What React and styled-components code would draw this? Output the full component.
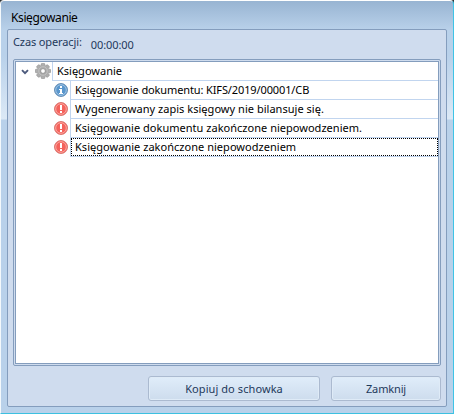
import React from 'react';
import styled, { createGlobalStyle } from 'styled-components';

const GlobalStyle = createGlobalStyle`
  * {
    box-sizing: border-box;
  }

  body {
    margin: 0;
    background: #2b3034;
    overflow: hidden;
  }
`;

const Window = styled.div`
  display: flex;
  flex-direction: column;
  width: 454px;
  height: 414px;
  padding: 0 7px 6px 6px;
  border: 1px solid #3cc0e0;
  border-top-color: #fff;
  border-left-color: #f4f9fc;
  border-right-color: #3fc4e6;
  border-radius: 4px 4px 0 0;
  background:
    linear-gradient(#98b4d2, #b9d1ea 29px, #b9d1ea 55px, #dce9f6 118px, #b9d1ea 119px);
  font-family: 'Noto Sans', 'Open Sans', sans-serif;
  font-size: 11px;
  line-height: 18px;
  color: #000;
`;

const TitleBar = styled.div`
  height: 28px;
  padding: 8px 0 0 4px;
  font-size: 12px;
`;

const Panel = styled.div`
  flex: 1;
  display: flex;
  flex-direction: column;
  width: 440px;
  padding: 3px 5px 5px;
  border: 1px solid #849dbd;
  border-radius: 2px;
  background: #cfdcee;
`;

const Timer = styled.div`
  display: flex;
  gap: 9px;
  height: 26px;
  color: #1e395b;
`;

const TimerValue = styled.span`
  padding-top: 3px;
  letter-spacing: -0.1px;
`;

const Label = styled.span`
  letter-spacing: ${(props) => props.$spacing || 0}px;
  white-space: nowrap;
`;

const ListFrame = styled.div`
  width: 428px;
  height: 307px;
  padding: 1px;
  border: 1px solid #849dbd;
  border-radius: 2px;
  background: #cfdcee;
`;

const List = styled.div`
  height: 303px;
  border: 1px solid #849dbd;
  background: #fff;
`;

const Row = styled.div`
  display: flex;
  height: 19px;
  padding-left: ${(props) => (props.$child ? 36 : 0)}px;
`;

const IconCell = styled.div`
  display: flex;
  align-items: center;
  justify-content: center;
  width: 18px;
  height: 18px;
`;

const Cell = styled.div`
  flex: 1;
  border-left: 1px solid #c1d5ef;
  border-bottom: 1px solid #c1d5ef;
`;

const CellText = styled.div`
  height: 18px;
  padding-left: 3px;
  border: 1px dotted ${(props) => (props.$focused ? '#000' : 'transparent')};
  line-height: 16px;
`;

const Footer = styled.div`
  display: flex;
  justify-content: flex-end;
  gap: 11px;
  padding-top: 10px;
`;

const Button = styled.button`
  width: ${(props) => props.$width}px;
  height: 25px;
  padding: 0;
  border: 1px solid #abbad0;
  border-radius: 3px;
  background: linear-gradient(#e0edfa, #cddced);
  box-shadow: inset 0 0 0 1px #dfebf7;
  font: inherit;
  color: #1e395b;
`;

const GearIcon = () => (
  <svg width="16" height="16" viewBox="0 0 16 16">
    <g fill="#b0b0b0" stroke="#8a8a8a" strokeWidth="0.6">
      {[0, 45, 90, 135].map((a) => (
        <rect key={a} x="6.2" y="0.4" width="3.6" height="15.2" rx="0.8" transform={`rotate(${a} 8 8)`} />
      ))}
    </g>
    <circle cx="8" cy="8" r="6" fill="#acacac" />
    <circle cx="8" cy="8" r="4.3" fill="none" stroke="#c2c2c2" />
    <circle cx="8" cy="8" r="2.4" fill="#fff" stroke="#888" strokeWidth="0.8" />
  </svg>
);

const InfoIcon = () => (
  <svg width="14" height="14" viewBox="0 0 14 14">
    <circle cx="7" cy="7" r="6.5" fill="#5a96cc" stroke="#557fa8" strokeWidth="0.8" />
    <circle cx="7" cy="7" r="5.3" fill="none" stroke="#a9cbe8" strokeWidth="0.9" />
    <path d="M6 3h2v2H6zM5 6h3v4h1v1H5v-1h1V7H5z" fill="#fff" />
  </svg>
);

const ErrorIcon = () => (
  <svg width="14" height="14" viewBox="0 0 14 14">
    <circle cx="7" cy="7" r="6.5" fill="#f4625c" stroke="#d0665f" strokeWidth="0.8" />
    <circle cx="7" cy="7" r="5.3" fill="none" stroke="#fcb0a8" strokeWidth="0.9" />
    <path d="M6 3h2v5H6zM6 9h2v2H6z" fill="#fff" />
  </svg>
);

const Chevron = () => (
  <svg width="8" height="8" viewBox="0 0 8 8">
    <path d="M1 3.2l3 3 3-3" fill="none" stroke="#4c5a7c" strokeWidth="1.9" />
  </svg>
);

const messages = [
  { type: 'info', text: 'Księgowanie dokumentu: KIFS/2019/00001/CB', spacing: -0.12 },
  { type: 'error', text: 'Wygenerowany zapis księgowy nie bilansuje się.', spacing: 0.03 },
  { type: 'error', text: 'Księgowanie dokumentu zakończone niepowodzeniem.', spacing: 0.02 },
  { type: 'error', text: 'Księgowanie zakończone niepowodzeniem', spacing: 0.03, focused: true },
];

const App = () => {
  return (
    <>
      <GlobalStyle />
      <Window>
        <TitleBar>
          <Label $spacing={-0.4}>Księgowanie</Label>
        </TitleBar>
        <Panel>
          <Timer>
            <Label $spacing={-0.12}>Czas operacji:</Label>
            <TimerValue>00:00:00</TimerValue>
          </Timer>
          <ListFrame>
            <List>
              <Row>
                <IconCell><Chevron /></IconCell>
                <IconCell><GearIcon /></IconCell>
                <Cell>
                  <CellText><Label>Księgowanie</Label></CellText>
                </Cell>
              </Row>
              {messages.map((m) => (
                <Row key={m.text} $child>
                  <IconCell>{m.type === 'info' ? <InfoIcon /> : <ErrorIcon />}</IconCell>
                  <Cell>
                    <CellText $focused={m.focused}>
                      <Label $spacing={m.spacing}>{m.text}</Label>
                    </CellText>
                  </Cell>
                </Row>
              ))}
            </List>
          </ListFrame>
          <Footer>
            <Button $width={172}><Label $spacing={0.08}>Kopiuj do schowka</Label></Button>
            <Button $width={110}><Label $spacing={-0.15}>Zamknij</Label></Button>
          </Footer>
        </Panel>
      </Window>
    </>
  );
};

export default App;
